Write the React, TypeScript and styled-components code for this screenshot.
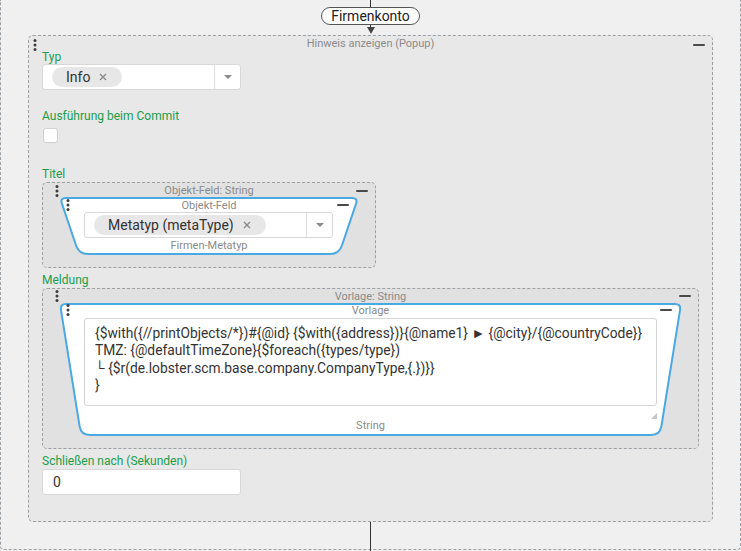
import React, { useLayoutEffect, useRef, useState } from "react";
import styled, { createGlobalStyle } from "styled-components";

const GlobalStyle = createGlobalStyle`
  html, body { margin: 0; padding: 0; background: #f0f0f0; }
  body { font-family: Roboto, "Liberation Sans", sans-serif; color: #333; }
  * { box-sizing: border-box; }
`;

const GREEN = "#1b9d4b";
const BLUE = "#4aa8e2";
const DASH = "#9a9fa4";

const Canvas = styled.div`
  width: 741px;
  height: 551px;
  overflow: hidden;
  background: #f0f0f0;
`;

const OuterFrame = styled.div`
  width: 741px;
  height: 550px;
  border: 1px dashed ${DASH};
  border-top: none;
  border-radius: 0 0 4px 4px;
  display: flex;
  flex-direction: column;
`;

const Connector = styled.div`
  display: flex;
  flex-direction: column;
  align-items: center;
`;

const VLine = styled.div<{ $h: number }>`
  width: 1px;
  height: ${(p) => p.$h}px;
  background: #333;
`;

const BottomLine = styled.div`
  align-self: center;
  width: 1px;
  flex: 1;
  margin-bottom: -2px;
  background: #333;
`;

const Pill = styled.div`
  height: 18px;
  padding: 0 9px;
  border: 1px solid #555;
  border-radius: 9px;
  background: #fff;
  font-size: 14px;
  line-height: 16px;
  color: #222;
`;

const ArrowDown = styled.div`
  width: 0;
  height: 0;
  border-left: 4px solid transparent;
  border-right: 4px solid transparent;
  border-top: 7px solid #444;
  margin-bottom: 1px;
`;

const HintBox = styled.div`
  position: relative;
  margin: 0 27px;
  height: 487px;
  flex: none;
  border: 1px dashed ${DASH};
  border-radius: 5px;
  background: #e8e8e8;
  padding: 0 13px;
`;

const BoxTitle = styled.div<{ $pt?: number }>`
  text-align: center;
  font-size: 11px;
  line-height: 13px;
  color: #8a8a8a;
  padding-top: ${(p) => p.$pt ?? 1}px;
`;

const HandleSvg = styled.svg<{ $left: number; $top: number }>`
  position: absolute;
  left: ${(p) => p.$left}px;
  top: ${(p) => p.$top}px;
`;

const Minimize = styled.div<{ $right: number; $top: number }>`
  position: absolute;
  right: ${(p) => p.$right}px;
  top: ${(p) => p.$top}px;
  width: 12px;
  height: 2px;
  border-radius: 1px;
  background: #4a4a4a;
`;

const Field = styled.div<{ $gap?: number; $after?: number }>`
  display: flex;
  flex-direction: column;
  align-items: flex-start;
  gap: ${(p) => p.$gap ?? 0}px;
  margin-bottom: ${(p) => p.$after ?? 0}px;
`;

const Label = styled.div`
  font-size: 12px;
  line-height: 14px;
  color: ${GREEN};
`;

const SelectBox = styled.div<{ $width: number }>`
  display: flex;
  width: ${(p) => p.$width}px;
  height: 26px;
  background: #fff;
  border: 1px solid #d8d8d8;
  border-radius: 3px;
`;

const SelectValue = styled.div`
  flex: 1;
  display: flex;
  align-items: center;
  padding-left: 9px;
`;

const Chip = styled.span`
  display: inline-flex;
  align-items: center;
  gap: 9px;
  height: 20px;
  padding: 0 15px 0 14px;
  border-radius: 10px;
  background: #e7e7e7;
  font-size: 14px;
  color: #333;
  white-space: nowrap;
`;

const SelectToggle = styled.div`
  width: 26px;
  border-left: 1px solid #dcdcdc;
  display: flex;
  align-items: center;
  justify-content: center;
`;

const Caret = styled.span`
  width: 0;
  height: 0;
  border-left: 4px solid transparent;
  border-right: 4px solid transparent;
  border-top: 4px solid #8a8a8a;
`;

const Checkbox = styled.div`
  width: 15px;
  height: 15px;
  margin-left: 1px;
  background: #fff;
  border: 1px solid #d0d0d0;
  border-radius: 3px;
`;

const TextInput = styled.div`
  width: 199px;
  height: 26px;
  background: #fff;
  border: 1px solid #d8d8d8;
  border-radius: 3px;
  padding-left: 10px;
  font-size: 14px;
  line-height: 24px;
  color: #333;
`;

const Group = styled.div<{ $width?: number }>`
  position: relative;
  width: ${(p) => (p.$width ? `${p.$width}px` : "100%")};
  align-self: ${(p) => (p.$width ? "flex-start" : "stretch")};
  border: 1px dashed ${DASH};
  border-radius: 5px;
  background: #e1e1e1;
  padding: 0 16px 12px 16px;
`;

const TrapWrap = styled.div<{ $h: number }>`
  position: relative;
  height: ${(p) => p.$h}px;
`;

const TrapShape = styled.svg`
  position: absolute;
  left: 0;
  top: 0;
  overflow: visible;
  pointer-events: none;
`;

const TrapContent = styled.div`
  position: relative;
  height: 100%;
  display: flex;
  flex-direction: column;
  padding: 0 25px;
`;

const TrapTitle = styled.div<{ $pt: number }>`
  text-align: center;
  font-size: 11px;
  line-height: 13px;
  color: #8a8a8a;
  padding-top: ${(p) => p.$pt}px;
`;

const SubCaption = styled.div<{ $mt: number }>`
  text-align: center;
  font-size: 11px;
  line-height: 13px;
  color: #8a8a8a;
  margin-top: ${(p) => p.$mt}px;
`;

const TextareaWrap = styled.div`
  position: relative;
  margin-top: 1px;
`;

const TemplateArea = styled.div`
  height: 88px;
  background: #fff;
  border: 1px solid #d4d4d4;
  border-radius: 3px;
  padding: 6px 10px;
  font-size: 13.8px;
  line-height: 17.33px;
  color: #333;
  white-space: pre;
`;

const Grip = styled.svg`
  position: absolute;
  right: 0;
  top: 95px;
`;

type Pt = [number, number];

function roundedPoly(pts: Pt[], radii: number[]): string {
  const n = pts.length;
  let d = "";
  for (let i = 0; i < n; i++) {
    const p = pts[i];
    const prev = pts[(i - 1 + n) % n];
    const next = pts[(i + 1) % n];
    const r = radii[i];
    const v1x = prev[0] - p[0];
    const v1y = prev[1] - p[1];
    const l1 = Math.hypot(v1x, v1y);
    const v2x = next[0] - p[0];
    const v2y = next[1] - p[1];
    const l2 = Math.hypot(v2x, v2y);
    const a: Pt = [p[0] + (v1x / l1) * r, p[1] + (v1y / l1) * r];
    const b: Pt = [p[0] + (v2x / l2) * r, p[1] + (v2y / l2) * r];
    d += `${i === 0 ? "M" : "L"}${a[0]},${a[1]} Q${p[0]},${p[1]} ${b[0]},${b[1]} `;
  }
  return d + "Z";
}

function Trapezoid({
  height,
  inset,
  children,
}: {
  height: number;
  inset: number;
  children: React.ReactNode;
}) {
  const ref = useRef<HTMLDivElement>(null);
  const [w, setW] = useState(0);
  useLayoutEffect(() => {
    const el = ref.current;
    if (!el) return;
    const update = () => setW(el.offsetWidth);
    update();
    const ro = new ResizeObserver(update);
    ro.observe(el);
    return () => ro.disconnect();
  }, []);
  const h = height;
  const pts: Pt[] = [
    [1, 1],
    [w - 1, 1],
    [w - 1 - inset, h - 1],
    [1 + inset, h - 1],
  ];
  return (
    <TrapWrap ref={ref} $h={height}>
      {w > 0 && (
        <TrapShape width={w} height={h}>
          <path
            d={roundedPoly(pts, [6, 6, 9, 9])}
            fill="#fff"
            stroke={BLUE}
            strokeWidth={2}
          />
        </TrapShape>
      )}
      <TrapContent>{children}</TrapContent>
    </TrapWrap>
  );
}

function Handle({ left, top }: { left: number; top: number }) {
  return (
    <HandleSvg $left={left} $top={top} width="4" height="12" viewBox="0 0 4 12">
      <circle cx="2" cy="1.6" r="1.5" fill="#3c3c3c" />
      <circle cx="2" cy="6" r="1.5" fill="#3c3c3c" />
      <circle cx="2" cy="10.4" r="1.5" fill="#3c3c3c" />
    </HandleSvg>
  );
}

function Cross() {
  return (
    <svg width="8" height="8" viewBox="0 0 8 8">
      <path d="M1 1 L7 7 M7 1 L1 7" stroke="#8a8a8a" strokeWidth="1.4" />
    </svg>
  );
}

function ChipSelect({ width, value }: { width: number; value: string }) {
  return (
    <SelectBox $width={width}>
      <SelectValue>
        <Chip>
          {value}
          <Cross />
        </Chip>
      </SelectValue>
      <SelectToggle>
        <Caret />
      </SelectToggle>
    </SelectBox>
  );
}

const template = [
  "{$with({//printObjects/*})#{@id} {$with({address})}{@name1} \u25BA {@city}/{@countryCode}}",
  "TMZ: {@defaultTimeZone}{$foreach({types/type})",
  "\u2514 {$r(de.lobster.scm.base.company.CompanyType,{.})}}",
  "}",
].join("\n");

export default function App() {
  return (
    <Canvas>
      <GlobalStyle />
      <OuterFrame>
        <Connector>
          <VLine $h={7} />
          <Pill>Firmenkonto</Pill>
          <VLine $h={2} />
          <ArrowDown />
        </Connector>
        <HintBox>
          <Handle left={4} top={3} />
          <Minimize $right={7} $top={8} />
          <BoxTitle $pt={1}>Hinweis anzeigen (Popup)</BoxTitle>

          <Field $after={19}>
            <Label>Typ</Label>
            <ChipSelect width={199} value="Info" />
          </Field>

          <Field $gap={5} $after={24}>
            <Label>Ausführung beim Commit</Label>
            <Checkbox />
          </Field>

          <Field $gap={1} $after={5}>
            <Label>Titel</Label>
            <Group $width={334}>
              <Handle left={12} top={2} />
              <Minimize $right={7} $top={7} />
              <BoxTitle>Objekt-Feld: String</BoxTitle>
              <Trapezoid height={58} inset={19}>
                <Handle left={7} top={2} />
                <Minimize $right={10} $top={7} />
                <TrapTitle $pt={2}>Objekt-Feld</TrapTitle>
                <ChipSelect width={249} value="Metatyp (metaType)" />
                <SubCaption $mt={1}>Firmen-Metatyp</SubCaption>
              </Trapezoid>
            </Group>
          </Field>

          <Field $gap={1} $after={5}>
            <Label>Meldung</Label>
            <Group>
              <Handle left={12} top={1} />
              <Minimize $right={7} $top={6} />
              <BoxTitle>Vorlage: String</BoxTitle>
              <Trapezoid height={133} inset={21}>
                <Handle left={7} top={1} />
                <Minimize $right={10} $top={6} />
                <TrapTitle $pt={1}>Vorlage</TrapTitle>
                <TextareaWrap>
                  <TemplateArea>{template}</TemplateArea>
                  <Grip width="6" height="6" viewBox="0 0 6 6">
                    <path d="M6 0 L6 6 L0 6 Z" fill="#c4c4c4" />
                  </Grip>
                </TextareaWrap>
                <SubCaption $mt={13}>String</SubCaption>
              </Trapezoid>
            </Group>
          </Field>

          <Field $gap={1}>
            <Label>Schließen nach (Sekunden)</Label>
            <TextInput>0</TextInput>
          </Field>
        </HintBox>
        <BottomLine />
      </OuterFrame>
    </Canvas>
  );
}
